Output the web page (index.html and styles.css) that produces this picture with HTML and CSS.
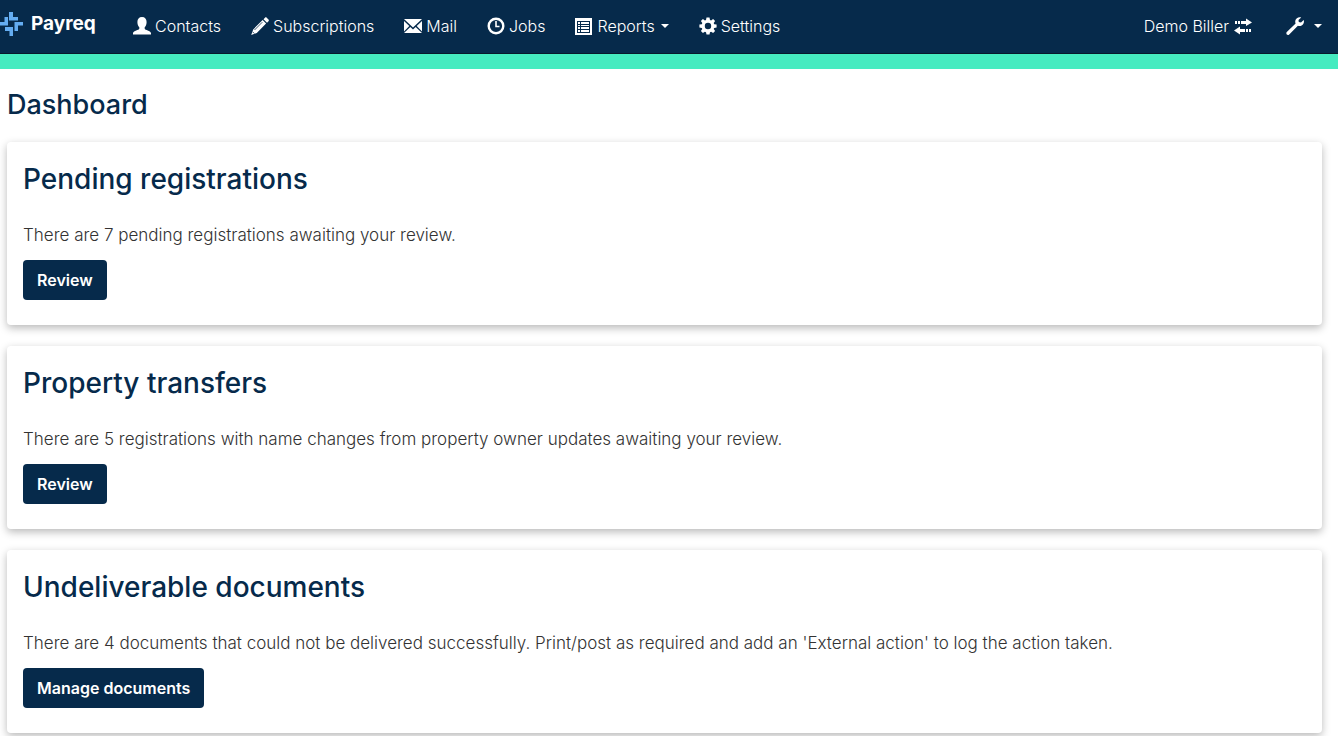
FILE: index.html
```html
<!DOCTYPE html>
<html lang="en">
<head>
<meta charset="utf-8">
<meta name="viewport" content="width=device-width, initial-scale=1">
<title>Payreq - Dashboard</title>
<link rel="stylesheet" href="styles.css">
</head>
<body>
<header class="topbar">
  <a class="brand" href="#">
    <svg class="logo" viewBox="0 0 24 24" aria-hidden="true"><path d="M9 0h4v5h5v3.500H9zM14.500 10H23v3.500h-5V19h-3.500zM5 15h8v9H9.500v-5H5zM0 10h4.500V5H8v8.500H0z"/></svg>
    <span>Payreq</span>
  </a>
  <nav class="nav" aria-label="Main">
    <a class="nav-item" href="#"><svg class="icon" viewBox="0 0 18 18" aria-hidden="true"><path d="M9 0c3 0 4.600 2 4.600 5 0 2-.6 4-1.900 5.300v1.500c.3 1.300 5.800 2 6.300 4.200v1.500H0V16c.5-2.200 6-2.900 6.300-4.200v-1.500C5 9 4.400 7 4.400 5c0-3 1.600-5 4.600-5z"/></svg>Contacts</a>
    <a class="nav-item" href="#"><svg class="icon" viewBox="0 0 18 18" aria-hidden="true"><path d="M14 .7c.5-.5 1.200-.5 1.700 0l1.800 1.800c.5.500.5 1.200 0 1.700L16 5.700 12.500 2.200zM11.600 3.100l3.500 3.500-9.300 9.300-5.600 2 2-5.500z"/><path class="cut" d="m3.500 13 7.800-7.800M1.600 14.800l1.700 1.700"/></svg>Subscriptions</a>
    <a class="nav-item" href="#"><svg class="icon" viewBox="0 0 18 18" aria-hidden="true"><path d="M0 2h18L9 10.500zM0 4l5.300 5L0 14.500zM18 4l-5.300 5 5.300 5.500zM6.300 10 9 12.600l2.700-2.600L18 16H0z"/></svg>Mail</a>
    <a class="nav-item" href="#"><svg class="icon" viewBox="0 0 18 18" aria-hidden="true"><circle class="line" cx="9" cy="9" r="7.300"/><path class="line thin" d="M9 4v5.500h3.500"/></svg>Jobs</a>
    <button class="nav-item" type="button" aria-haspopup="true"><svg class="icon" viewBox="0 0 18 18" aria-hidden="true"><path fill-rule="evenodd" d="M0 1h17v17H0zM2 4v12h13V4zM3 5h2v2H3zm3 0h8v2H6zM3 8h2v1H3zm3 0h8v1H6zm-3 2h2v2H3zm3 0h8v2H6zm-3 3h2v2H3zm3 0h8v2H6z"/></svg>Reports<span class="caret"></span></button>
    <a class="nav-item" href="#"><svg class="icon" viewBox="0 0 18 18" aria-hidden="true"><path fill-rule="evenodd" d="M7.500.5h3l.5 2.400 1.100.5 2-1.400 2 2-1.400 2 .5 1.200 2.400.4v2.900l-2.400.5-.5 1.100 1.400 2-2 2-2-1.400-1.100.5-.5 2.400h-3L7 15.200l-1.100-.5-2 1.400-2-2 1.400-2-.5-1.100-2.400-.5V7.600l2.400-.4.500-1.200-1.400-2 2-2 2 1.400L7 2.900zM9 5.800a3.200 3.200 0 1 0 0 6.400 3.200 3.200 0 0 0 0-6.400z"/></svg>Settings</a>
  </nav>
  <div class="nav nav-right">
    <a class="nav-item" href="#">Demo Biller<svg class="icon" viewBox="0 0 18 18" aria-hidden="true"><path d="M1 4h2v3H1zM4 4h2v3H4zM7 4h5V1.500l6 4-6 3.500V7H7zM6 9.500V12h5v3H6v2.500L0 13.500zM12 12h2v3h-2zM15 12h2v3h-2z"/></svg></a>
    <button class="nav-item tools" type="button" aria-haspopup="true" aria-label="Tools"><svg class="icon" viewBox="0 0 18 18" aria-hidden="true"><path d="M15.200.5 12.500 3l.3 2.100 2.200.4 2.700-2.600c.8 2.500-.2 5-2.500 5.900-1.200.5-2.300.3-3.300 0L3.200 17.400c-1.700 1.500-3.800-.7-2.400-2.400L9.600 6.500c-.8-2-.3-4 1.300-5.300C12.200.1 13.800 0 15.200.5z"/></svg><span class="caret"></span></button>
  </div>
</header>
<main class="page">
  <h1 class="title">Dashboard</h1>
  <section class="card">
    <h2 class="title card-title">Pending registrations</h2>
    <p class="message">There are 7 pending registrations awaiting your review.</p>
    <button class="button" type="button">Review</button>
  </section>
  <section class="card">
    <h2 class="title card-title">Property transfers</h2>
    <p class="message">There are 5 registrations with name changes from property owner updates awaiting your review.</p>
    <button class="button" type="button">Review</button>
  </section>
  <section class="card">
    <h2 class="title card-title">Undeliverable documents</h2>
    <p class="message">There are 4 documents that could not be delivered successfully. Print/post as required and add an 'External action' to log the action taken.</p>
    <button class="button" type="button">Manage documents</button>
  </section>
</main>
</body>
</html>
```
FILE: styles.css
```css
* { box-sizing: border-box; }
body {
  margin: 0;
  background: #fff;
  color: #333;
  font-family: Inter, "Liberation Sans", sans-serif;
  font-size: 17px;
}
.topbar {
  display: flex;
  align-items: center;
  padding-bottom: 2px;
  height: 69px;
  background: #062a4b;
  border-bottom: 15px solid #46ebc0;
  box-shadow: inset 0 -1px #08192b;
}
.brand {
  display: flex;
  align-items: center;
  gap: 7px;
  width: 118px;
  padding-bottom: 5px;
  color: #fff;
  font-size: 19px;
  font-weight: 700;
  text-decoration: none;
}
.logo { width: 24px; height: 24px; fill: #64adf2; }
.nav { display: flex; }
.nav-right { margin-left: auto; }
.nav-item {
  display: flex;
  align-items: center;
  gap: 4px;
  padding: 0 15px;
  border: 0;
  background: none;
  color: #fff;
  font: inherit;
  font-size: 16px;
  font-weight: 300;
  line-height: 24px;
  text-decoration: none;
  white-space: nowrap;
}
.nav-right .nav-item { gap: 5px; }
.nav-right .tools { gap: 8px; padding: 0 16px 0 19px; }
.icon { width: 18px; height: 18px; fill: #fff; }
.line { fill: none; stroke: #fff; stroke-width: 2.4; }
.thin { stroke-width: 1.6; }
.cut { fill: none; stroke: #062a4b; stroke-width: 0.8; }
.caret {
  margin-left: 2px;
  border-top: 4px solid #fff;
  border-left: 4px solid transparent;
  border-right: 4px solid transparent;
}
.page {
  display: flex;
  flex-direction: column;
  gap: 21px;
  padding: 20px 16px 3px 7px;
  overflow: hidden;
}
.title {
  margin: 0;
  color: #062a4b;
  font-size: 27px;
  font-weight: 500;
  line-height: 32px;
}
.card-title { font-size: 28px; }
.card {
  padding: 21px 16px 25px;
  border-radius: 4px;
  background: #fff;
  box-shadow: 0 3px 8px rgba(0, 0, 0, 0.28);
}
.message {
  margin: 28px 0 12px;
  font-weight: 300;
  line-height: 25px;
}
.button {
  padding: 8px 14px;
  border: 0;
  border-radius: 4px;
  background: #062a4b;
  color: #fff;
  font: inherit;
  font-size: 16px;
  font-weight: 600;
  line-height: 24px;
}
```
